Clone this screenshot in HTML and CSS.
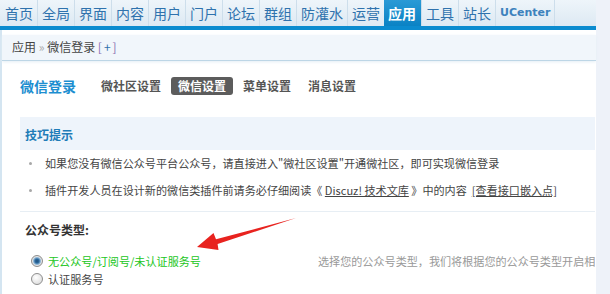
FILE: index.html
```html
<!DOCTYPE html>
<html lang="zh-CN">
<head>
<meta charset="utf-8">
<title>微信登录</title>
<link rel="stylesheet" href="styles.css">
</head>
<body>
<div class="page">
  <ul class="nav">
    <li>首页</li><li>全局</li><li>界面</li><li>内容</li><li>用户</li><li>门户</li><li>论坛</li><li>群组</li><li>防灌水</li><li>运营</li><li class="on">应用</li><li>工具</li><li>站长</li><li class="uc">UCenter</li>
  </ul>
  <div class="frame">
    <div class="crumb">应用 <span class="raquo">&raquo;</span> 微信登录 <span class="plus">[<b>+</b>]</span></div>
    <div class="content">
      <div class="titlebar">
        <h3 class="title">微信登录</h3>
        <ul class="tabs">
          <li>微社区设置</li>
          <li class="cur">微信设置</li>
          <li>菜单设置</li>
          <li>消息设置</li>
        </ul>
      </div>
      <div class="tips">
        <div class="tips-head">技巧提示</div>
        <ul class="tips-list">
          <li>如果您没有微信公众号平台公众号，请直接进入"微社区设置"开通微社区，即可实现微信登录</li>
          <li>插件开发人员在设计新的微信类插件前请务必仔细阅读《 <a>Discuz! 技术文库</a> 》中的内容 &nbsp;<a>[查看接口嵌入点]</a></li>
        </ul>
      </div>
      <div class="sep"></div>
      <div class="field-label">公众号类型:</div>
      <div class="field-row">
        <div class="radios">
          <label class="radio green"><input type="radio" name="t" checked> 无公众号/订阅号/未认证服务号</label>
          <label class="radio"><input type="radio" name="t"> 认证服务号</label>
        </div>
        <div class="help">选择您的公众号类型，我们将根据您的公众号类型开启相应的功能</div>
      </div>
    </div>
  </div>
  <svg class="arrow" width="610" height="294" viewBox="0 0 610 294">
    <polygon points="197,247 213.5,233 216,239.3 296,218 217.6,244 218.5,250" fill="#e8231f"/>
  </svg>
</div>
</body>
</html>
```
FILE: styles.css
```css
html, body {
  margin: 0;
  padding: 0;
}
body {
  background: #eef2f9;
  font-family: "Noto Sans CJK SC", "DejaVu Sans", sans-serif;
  font-size: 12px;
  color: #444;
  overflow: hidden;
}
.page {
  position: relative;
  width: 596px;
  height: 294px;
  background: #fff;
}
.nav {
  list-style: none;
  margin: 0;
  padding: 0 0 0 1px;
  height: 26px;
  display: flex;
  background: linear-gradient(#eef5fa, #dde9f3);
  border-bottom: 4px solid #0b8bcf;
}
.nav li {
  padding: 0 4px;
  line-height: 26px;
  font-size: 14px;
  color: #2f72ad;
  border-right: 1px solid #cddeeb;
  height: 26px;
}
.nav li.on {
  background: linear-gradient(#2a9ad6, #0a82c4);
  color: #fff;
  padding: 0 5px 0 4px;
  margin-left: -1px;
  font-weight: bold;
}
.nav li.uc {
  font-family: "DejaVu Sans", "Liberation Sans", sans-serif;
  font-size: 11px;
  font-weight: bold;
  color: #3c82bd;
}
.frame {
  border-left: 2px solid #d4e5f1;
  padding-top: 5px;
  height: 259px;
}
.crumb {
  height: 25px;
  line-height: 24px;
  background: #f1f6fb;
  border-bottom: 1px solid #bdd6e6;
  box-shadow: 0 1px 3px #e4eef5;
  padding-left: 10px;
  color: #444;
}
.raquo {
  color: #aaa;
}
.plus {
  color: #8a6fb0;
  letter-spacing: 2px;
}
.plus b {
  color: #2f72ad;
  font-weight: normal;
}
.content {
  padding: 0 1px 0 18px;
}
.titlebar {
  display: flex;
  align-items: center;
  height: 28px;
  margin-top: 11px;
}
.title {
  margin: 0 18px 0 0;
  font-size: 14px;
  font-weight: bold;
  color: #1c8ed0;
}
.tabs {
  list-style: none;
  margin: 0;
  padding: 0;
  display: flex;
}
.tabs li {
  padding: 0 7px;
  margin-right: 3px;
  line-height: 18px;
  font-weight: bold;
  color: #555;
  border-radius: 3px;
}
.tabs li.cur {
  background: #5c5c5c;
  color: #fff;
}
.tips {
  margin-top: 17px;
}
.tips-head {
  height: 33px;
  line-height: 35px;
  background: #eef4fb;
  padding-left: 5px;
  font-weight: bold;
  color: #1f7cb8;
}
.tips-list {
  list-style: none;
  margin: 0;
  padding: 0;
}
.tips-list li {
  position: relative;
  line-height: 27px;
  padding-left: 25px;
  font-size: 11.1px;
  color: #444;
  white-space: nowrap;
}
.tips-list li::before {
  content: "";
  position: absolute;
  left: 9px;
  top: 12px;
  width: 3px;
  height: 3px;
  border-radius: 50%;
  background: #a8a8a8;
}
.tips-list a {
  color: #444;
  text-decoration: underline;
}
.sep {
  margin-top: 7px;
  border-top: 1px solid #e7eef4;
}
.field-label {
  margin-top: 9px;
  padding-left: 5px;
  line-height: 18px;
  font-weight: bold;
  color: #333;
}
.field-row {
  display: flex;
  margin-top: 13px;
}
.radios {
  width: 288px;
  padding-left: 11px;
  display: flex;
  flex-direction: column;
}
.radio {
  display: flex;
  align-items: center;
  line-height: 18px;
  height: 18px;
  font-size: 11.1px;
  white-space: nowrap;
}
.radio input {
  appearance: none;
  -webkit-appearance: none;
  margin: 0 5px 0 0;
  width: 12px;
  height: 12px;
  border-radius: 50%;
  border: 1px solid #8e8e8e;
  background: radial-gradient(circle at 40% 35%, #ffffff, #d6d6d6);
  box-sizing: border-box;
}
.radio input:checked {
  background: radial-gradient(circle, #1e4f7c 0, #2c6a9e 2px, #8fb6d6 3.5px, #e6e6e6 4.5px, #cfcfcf 6px);
}
.radio.green {
  color: #22c622;
}
.help {
  color: #999;
  font-size: 11.1px;
  line-height: 18px;
  white-space: nowrap;
  overflow: hidden;
  width: 278px;
}
.arrow {
  position: absolute;
  left: 0;
  top: 0;
  pointer-events: none;
}
```
